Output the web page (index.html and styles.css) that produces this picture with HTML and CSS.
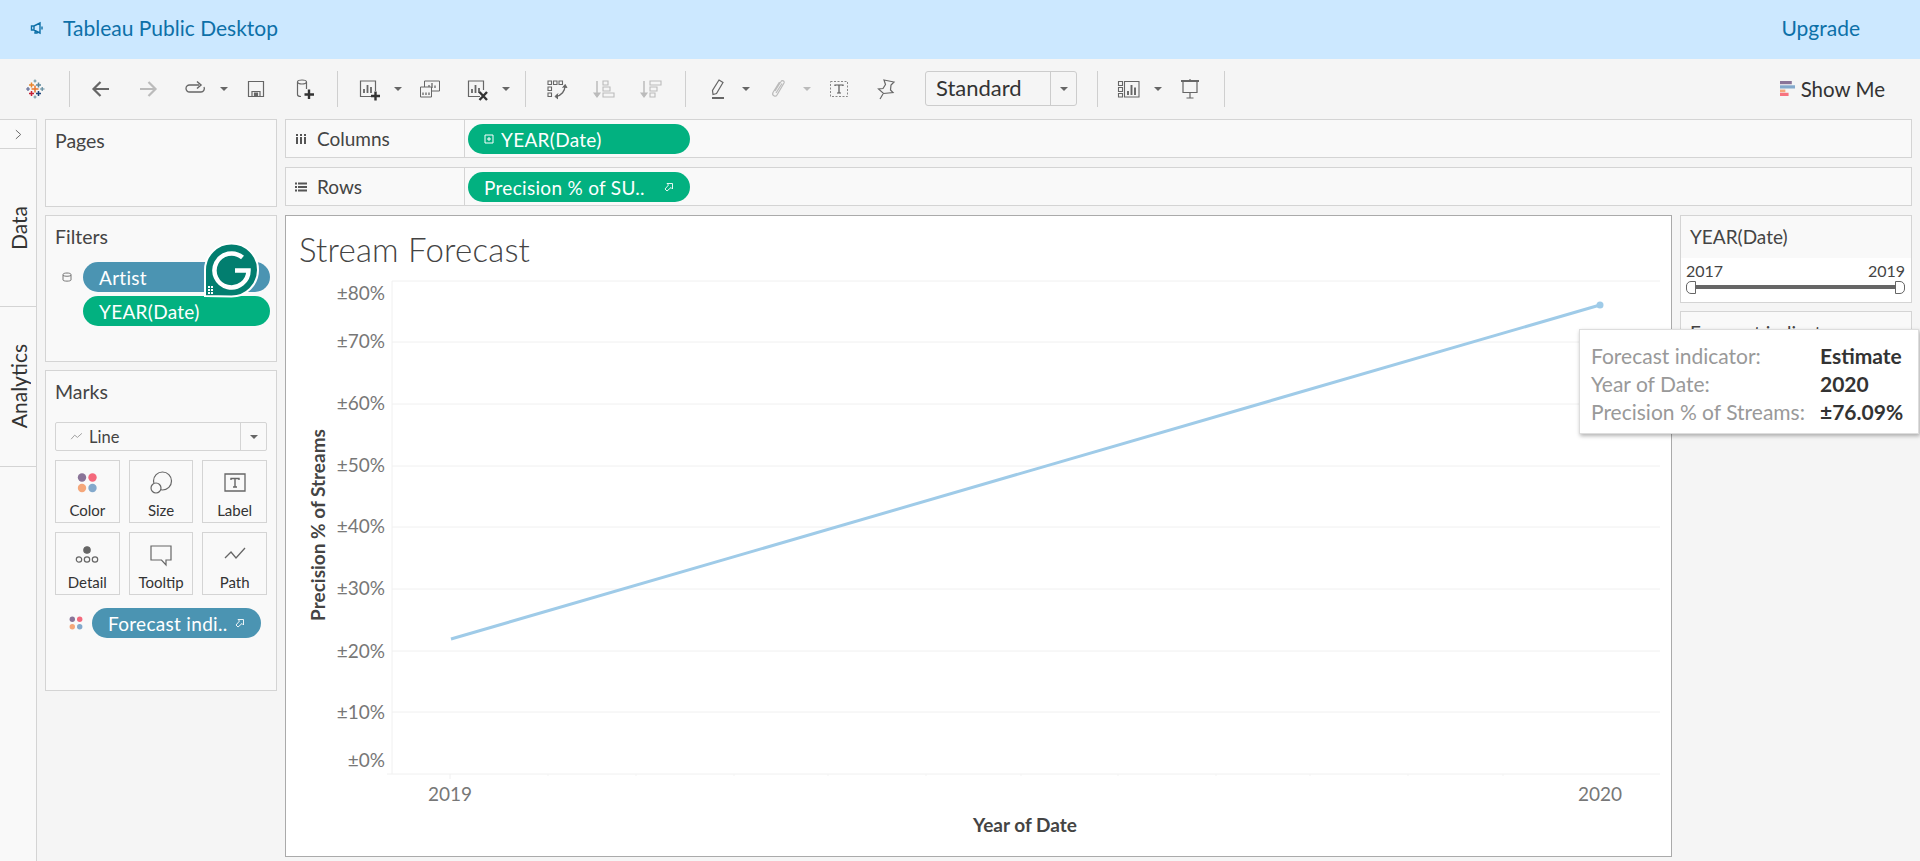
FILE: index.html
```html
<!DOCTYPE html>
<html lang="en">
<head>
    <meta charset="UTF-8">
    <title>Tableau Public Desktop</title>
    <link rel="stylesheet" href="styles.css">
</head>
<body>
    <header class="topbar">
        <div class="brand">
            <svg class="brand-icon" viewBox="0 0 14 14"><path d="M1.500 5v4h2.500l6 3V2L4 5zM4 5v4M5 9.500v2.500h2v-1.500M12 5.500v3" fill="none" stroke="#0d70a8" stroke-width="1.400"/></svg>
            <span>Tableau Public Desktop</span>
        </div>
        <a class="upgrade">Upgrade</a>
    </header>

    <div class="toolbar">
        <div class="tool">
            <svg viewBox="0 0 24 24" fill="none" stroke-width="1.500">
                <path d="M6 8H11M8.500 5.500V10.500" stroke="#e8862c"/>
                <path d="M8.500 12H15.500M12 8.500V15.500" stroke="#e8762c"/>
                <path d="M13 8H18M15.500 5.500V10.500" stroke="#5b879b"/>
                <path d="M6 16.500H11M8.500 14V19" stroke="#c72035"/>
                <path d="M13 16.500H18M15.500 14V19" stroke="#1f447a"/>
                <path d="M3 12H7M5 10V14" stroke="#5b6591" stroke-width="1.200"/>
                <path d="M17 12H21.500M19.200 10V14" stroke="#5b879b" stroke-width="1.200"/>
                <path d="M10.500 4H13.500M12 2.500V5.500" stroke="#7099a6" stroke-width="1.200"/>
                <path d="M10.500 20H13.500M12 18.500V21.500" stroke="#7099a6" stroke-width="1.200"/>
            </svg>
        </div>
        <div class="sep"></div>
        <div class="tool">
            <svg viewBox="0 0 24 24" fill="none" stroke="#666" stroke-width="2.200"><path d="M20 12H5M11.500 5L4.500 12L11.500 19"/></svg>
        </div>
        <div class="tool">
            <svg viewBox="0 0 24 24" fill="none" stroke="#bbb" stroke-width="2.200"><path d="M4 12H19M12.500 5L19.500 12L12.500 19"/></svg>
        </div>
        <div class="tool">
            <svg viewBox="0 0 24 24" fill="none" stroke="#666" stroke-width="1.300"><path d="M16 8H6.500a3.500 3.500 0 0 0 0 7H18a3.500 3.500 0 0 0 3-5"/><path d="M14 4.500L18 8L14 11.500" stroke-width="1.500"/></svg>
        </div>
        <div class="caret"></div>
        <div class="tool">
            <svg viewBox="0 0 24 24" fill="none" stroke="#666" stroke-width="1.200"><path d="M4.500 4.500H19.500V19.500H4.500Z"/><path d="M8 19.500V14.500H16V19.500"/><path d="M10.500 16H13.500V19.500H10.500Z" fill="#666"/></svg>
        </div>
        <div class="tool">
            <svg viewBox="0 0 24 24" fill="none" stroke="#666" stroke-width="1.200"><ellipse cx="11" cy="5" rx="4.500" ry="2"/><path d="M6.500 5V17.500c0 1.200 1.500 2 3.500 2M15.500 5V12"/><path d="M18 12.500V22M13.500 17.500H23" stroke="#333" stroke-width="2.400"/></svg>
        </div>
        <div class="sep"></div>
        <div class="tool">
            <svg viewBox="0 0 24 24" fill="none" stroke="#666" stroke-width="1.200"><path d="M16 19.500H3.500V4H18.500V14"/><path d="M7 16V12M10.500 16V8M14 16V10" stroke-width="1.800"/><path d="M18.500 14.500V23.500M14 19H23" stroke="#333" stroke-width="2.400"/></svg>
        </div>
        <div class="caret"></div>
        <div class="tool">
            <svg viewBox="0 0 24 24" fill="none" stroke="#666" stroke-width="1"><path d="M6.500 10V4H21.500V14H14"/><path d="M11 11V8M14 11V6M17 11V8.500" stroke-width="1.300"/><path d="M2.500 10H13.500V20H2.500Z" fill="#f5f5f5"/><path d="M5 18V15.500M8 18V15.500M11 18V15.500" stroke-width="1.300"/></svg>
        </div>
        <div class="tool">
            <svg viewBox="0 0 24 24" fill="none" stroke="#666" stroke-width="1.200"><path d="M15 19.500H3.500V4H18.500V13"/><path d="M7 16V12M10.500 16V8M14 16V11" stroke-width="1.800"/><path d="M14.500 15L22 23M22 15L14.500 23" stroke="#333" stroke-width="2.400"/></svg>
        </div>
        <div class="caret"></div>
        <div class="sep"></div>
        <div class="tool">
            <svg viewBox="0 0 24 24" fill="none" stroke="#666" stroke-width="1.100"><path d="M3 4H6.500V7.500H3ZM8.500 4H12V7.500H8.500ZM14 4H17.500V7.500H14ZM3 10H6.500V13.500H3ZM3 16H6.500V19.500H3Z"/><path d="M20 9c0 5-3.500 9.500-9 10.500" stroke-width="1.300"/><path d="M17.500 10.500L20.200 7.500L22 11M13 16.500L10 19.500L13 22" fill="#666" stroke-width="1"/></svg>
        </div>
        <div class="tool">
            <svg viewBox="0 0 24 24" fill="none" stroke="#bbb" stroke-width="1.100"><path d="M5 4V18" stroke-width="1.500"/><path d="M2 16L5 20L8 16Z" fill="#bbb"/><path d="M11 4H16V8H11ZM11 10H18V14H11ZM11 16H22V20H11Z"/></svg>
        </div>
        <div class="tool">
            <svg viewBox="0 0 24 24" fill="none" stroke="#bbb" stroke-width="1.100"><path d="M5 4V18" stroke-width="1.500"/><path d="M2 16L5 20L8 16Z" fill="#bbb"/><path d="M11 4H22V8H11ZM11 10H18V14H11ZM11 16H16V20H11Z"/></svg>
        </div>
        <div class="sep"></div>
        <div class="tool">
            <svg viewBox="0 0 24 24" fill="none" stroke="#666" stroke-width="1.200"><path d="M14 3L18 5.500L11.500 16.500L8 17.500L7.500 13.500Z"/><path d="M7 21H19" stroke-width="2"/></svg>
        </div>
        <div class="caret"></div>
        <div class="tool">
            <svg viewBox="0 0 24 24" fill="none" stroke="#bbb" stroke-width="1.200"><path d="M9 14L15 4.500c1-1.700 4-.5 3 1.500L11 18c-1.500 2.500-5.500.5-4-2.500L13.500 5M10 16l6-9.500"/></svg>
        </div>
        <div class="caret caret-off"></div>
        <div class="tool">
            <svg viewBox="0 0 24 24" fill="none" stroke="#888" stroke-width="1"><path d="M3.500 4.500H20.500V19.500H3.500Z" stroke-dasharray="2 1.500"/><path d="M8 9V8H16V9M12 8V16M10 16H14" stroke="#555" stroke-width="1.200"/></svg>
        </div>
        <div class="tool tool-pin">
            <svg viewBox="0 0 24 24" fill="none" stroke="#666" stroke-width="1.200"><path d="M10 3L20 5L17 8L16.500 13L19 15.500L9.500 16.500L4.500 12L9 11.500L11.500 7.500Z"/><path d="M9 17L6 22"/></svg>
        </div>
        <div class="combo">
            <span class="combo-text">Standard</span>
            <span class="combo-btn"><i class="caret caret-dark"></i></span>
        </div>
        <div class="sep"></div>
        <div class="tool">
            <svg viewBox="0 0 24 24" fill="none" stroke="#666" stroke-width="1.100"><path d="M1.500 4.500H5.500V8.500H1.500ZM1.500 10.500H5.500V14.500H1.500ZM1.500 16.500H5.500V20H1.500ZM7.500 4.500H22V20H7.500Z"/><path d="M11 18V14M14.500 18V8M18 18V10.500" stroke-width="1.900"/></svg>
        </div>
        <div class="caret"></div>
        <div class="tool">
            <svg viewBox="0 0 24 24" fill="none" stroke="#666" stroke-width="1.200"><path d="M3 4H21" stroke-width="2"/><path d="M5 4V15.500H19V4M12 2V4M12 15.500V21M8.500 21H15.500"/></svg>
        </div>
        <div class="sep"></div>
        <div class="show-me">
            <svg viewBox="0 0 14 14" class="show-me-icon">
                <rect x="0" y="0" width="11" height="3" fill="#8a7498"/>
                <rect x="0" y="4" width="14" height="3" fill="#83a9cc"/>
                <rect x="0" y="8" width="5" height="2.500" fill="#f5a77a"/>
                <rect x="0" y="11" width="8" height="3" fill="#f7737f"/>
            </svg>
            <span>Show Me</span>
        </div>
    </div>

    <div class="workspace">
        <nav class="side-tabs">
            <div class="tabs-toggle">
                <svg viewBox="0 0 8 12" width="7" height="11" fill="none" stroke="#666" stroke-width="1.100"><path d="M1 1L6.500 6L1 11"/></svg>
            </div>
            <div class="side-tab side-tab-data"><span>Data</span></div>
            <div class="side-tab"><span>Analytics</span></div>
        </nav>

        <aside class="cards">
            <section class="panel panel-pages">
                <h2>Pages</h2>
            </section>
            <section class="panel panel-filters">
                <h2>Filters</h2>
                <div class="filter-row">
                    <svg class="db-icon" viewBox="0 0 10 10" fill="none" stroke="#777"><path d="M1 2.500C1 .5 9 .5 9 2.500V8c0 1.500-8 1.500-8 0ZM1 3.500c2 1 6 1 8 0"/></svg>
                    <div class="pill pill-blue">Artist</div>
                </div>
                <div class="filter-row">
                    <div class="pill pill-green">YEAR(Date)</div>
                </div>
                <svg class="grammarly" viewBox="0 0 57 54">
                    <path d="M2 53V27A26.500 26.500 0 1 1 28.500 53.500Z" fill="#027e6f" stroke="#fff" stroke-width="2"/>
                    <path d="M39.500 14.500A17 17 0 1 0 45.500 27.500H32" fill="none" stroke="#fff" stroke-width="4.500"/>
                    <path d="M5 43h2v2H5zM8 43h2v2H8zM5 46h2v2H5zM8 46h2v2H8zM5 49h2v2H5zM8 49h2v2H8z" fill="#fff"/>
                </svg>
            </section>
            <section class="panel panel-marks">
                <h2>Marks</h2>
                <div class="mark-type">
                    <span class="mark-type-name">
                        <svg viewBox="0 0 14 10" width="13" height="9" fill="none" stroke="#999" stroke-width="1"><path d="M1 8L5 3.500L8 6L13 1.500"/></svg>
                        Line
                    </span>
                    <span class="mark-type-btn"><i class="caret caret-dark"></i></span>
                </div>
                <div class="mark-grid">
                    <div class="mark-card">
                        <svg viewBox="0 0 24 24">
                            <circle cx="7" cy="6.500" r="4.200" fill="#8a7498"/>
                            <circle cx="17.500" cy="6.500" r="4.200" fill="#f4697c"/>
                            <circle cx="7" cy="17" r="4.200" fill="#f5a77a"/>
                            <circle cx="17.500" cy="17" r="4.200" fill="#83a9cc"/>
                        </svg>
                        <span>Color</span>
                    </div>
                    <div class="mark-card">
                        <svg viewBox="0 0 24 24" fill="none" stroke="#666" stroke-width="1.200"><circle cx="13.500" cy="10" r="9"/><circle cx="7" cy="17" r="5" fill="#f9f9f9"/></svg>
                        <span>Size</span>
                    </div>
                    <div class="mark-card">
                        <svg viewBox="0 0 24 24" fill="none" stroke="#666" stroke-width="1.300"><path d="M2 3H22V20H2Z"/><path d="M8 9V7.500H16V9M12 7.500V16M10 16H14" stroke-width="1.400"/></svg>
                        <span>Label</span>
                    </div>
                    <div class="mark-card">
                        <svg viewBox="0 0 24 24" fill="none" stroke="#666" stroke-width="1.200"><circle cx="12" cy="7" r="3.200" fill="#666"/><circle cx="4" cy="16.500" r="2.700"/><circle cx="12" cy="16.500" r="2.700"/><circle cx="20" cy="16.500" r="2.700"/></svg>
                        <span>Detail</span>
                    </div>
                    <div class="mark-card">
                        <svg viewBox="0 0 24 24" fill="none" stroke="#666" stroke-width="1.200"><path d="M2 3H22V17H17V22L12.500 17H2Z"/></svg>
                        <span>Tooltip</span>
                    </div>
                    <div class="mark-card">
                        <svg viewBox="0 0 24 24" fill="none" stroke="#666" stroke-width="1.300"><path d="M2 15L8 9L13 15L22 5"/></svg>
                        <span>Path</span>
                    </div>
                </div>
                <div class="mark-field">
                    <svg class="mark-field-icon" viewBox="0 0 14 14">
                        <circle cx="3.300" cy="3.300" r="2.700" fill="#8a7498"/>
                        <circle cx="10.700" cy="3.300" r="2.700" fill="#f4697c"/>
                        <circle cx="3.300" cy="10.700" r="2.700" fill="#f5a77a"/>
                        <circle cx="10.700" cy="10.700" r="2.700" fill="#83a9cc"/>
                    </svg>
                    <div class="pill pill-blue pill-end">
                        Forecast indi..
                        <svg class="pill-glyph" viewBox="0 0 10 10" fill="none" stroke="#fff" stroke-width=".9"><path d="M3 1.500H8.500V7L7 5.500L3 9L1 7L4.500 3Z"/></svg>
                    </div>
                </div>
            </section>
        </aside>

        <main class="content">
            <div class="shelf">
                <div class="shelf-label">
                    <svg viewBox="0 0 12 12" width="12" height="12" fill="#555"><path d="M1 4h2v7H1zM5 4h2v7H5zM9 4h2v7H9zM1 1h2v2H1zM5 1h2v2H5zM9 1h2v2H9z"/></svg>
                    Columns
                </div>
                <div class="shelf-body">
                    <div class="pill pill-green pill-shelf">
                        <svg class="pill-plus" viewBox="0 0 10 10" fill="none" stroke="#fff"><path d="M1 1H9V9H1ZM3 5H7M5 3V7"/></svg>
                        YEAR(Date)
                    </div>
                </div>
            </div>
            <div class="shelf">
                <div class="shelf-label">
                    <svg viewBox="0 0 12 12" width="12" height="12" fill="#555"><path d="M0 1.500h2v2H0zM3 1.500h9v2H3zM0 5h2v2H0zM3 5h9v2H3zM0 8.500h2v2H0zM3 8.500h9v2H3z"/></svg>
                    Rows
                </div>
                <div class="shelf-body">
                    <div class="pill pill-green pill-shelf pill-end">
                        Precision % of SU..
                        <svg class="pill-glyph" viewBox="0 0 10 10" fill="none" stroke="#fff" stroke-width=".9"><path d="M3 1.500H8.500V7L7 5.500L3 9L1 7L4.500 3Z"/></svg>
                    </div>
                </div>
            </div>
            <div class="view-row">
                <section class="chart">
                    <svg class="chart-svg" viewBox="286 216 1385 640">
                        <text class="chart-title" x="299" y="262">Stream Forecast</text>

                        <path class="grid" d="M392 281H1660M392 342H1660M392 404H1660M392 466H1660M392 527H1660M392 589H1660M392 651H1660M392 712H1660M387 774H1660M392 281V774"/>
                        <path class="grid" d="M450 774V779"/>
                        <path class="tick" d="M548 774v2M636 774v2M734 774v2M828 774v2M926 774v2M1021 774v2M1118 774v2M1216 774v2M1310 774v2M1408 774v2M1503 774v2"/>

                        <g class="axis-y">
                            <text x="385" y="300">±80%</text>
                            <text x="385" y="348">±70%</text>
                            <text x="385" y="410">±60%</text>
                            <text x="385" y="472">±50%</text>
                            <text x="385" y="533">±40%</text>
                            <text x="385" y="595">±30%</text>
                            <text x="385" y="658">±20%</text>
                            <text x="385" y="719">±10%</text>
                            <text x="385" y="767">±0%</text>
                        </g>
                        <g class="axis-x">
                            <text x="450" y="801">2019</text>
                            <text x="1600" y="801">2020</text>
                        </g>
                        <text class="axis-title" x="1025" y="832">Year of Date</text>
                        <text class="axis-title" transform="translate(325 525) rotate(-90)">Precision % of Streams</text>

                        <path d="M451 639L1600 305" fill="none" stroke="#9fcbe8" stroke-width="3"/>
                        <circle cx="1600" cy="305" r="3.500" fill="#9fcbe8"/>
                    </svg>
                </section>
                <aside class="legends">
                    <section class="panel panel-slider">
                        <h3>YEAR(Date)</h3>
                        <div class="slider-body">
                            <div class="slider-labels"><span>2017</span><span>2019</span></div>
                            <div class="slider-track"></div>
                        </div>
                    </section>
                    <section class="panel panel-legend">
                        <h3>Forecast indicator</h3>
                    </section>
                </aside>
            </div>
        </main>
    </div>

    <div class="tooltip">
        <span class="tip-key">Forecast indicator:</span><span class="tip-val">Estimate</span>
        <span class="tip-key">Year of Date:</span><span class="tip-val">2020</span>
        <span class="tip-key">Precision % of Streams:</span><span class="tip-val">±76.09%</span>
    </div>
</body>
</html>
```

FILE: styles.css
```css
* {
    box-sizing: border-box;
}

body {
    margin: 0;
    height: 861px;
    overflow: hidden;
    background: #f5f5f5;
    font-family: Lato, "Open Sans", sans-serif;
    color: #444;
}

h2, h3 {
    margin: 0;
    font-weight: 400;
}

/* top banner */
.topbar {
    height: 59px;
    padding: 0 60px 4px 30px;
    display: flex;
    align-items: center;
    justify-content: space-between;
    background: #cce8ff;
    color: #0d70a8;
    font-size: 21px;
}

.brand {
    display: flex;
    align-items: center;
    gap: 19px;
}

.brand-icon {
    width: 14px;
    height: 14px;
}

/* toolbar */
.toolbar {
    height: 59px;
    padding-left: 15px;
    display: flex;
    align-items: center;
    gap: 7px;
}

.tool {
    width: 40px;
    height: 24px;
    display: flex;
    justify-content: center;
    flex: none;
}

.tool svg {
    width: 24px;
    height: 24px;
}

.tool-pin {
    margin-right: 5px;
}

.sep {
    width: 1px;
    height: 36px;
    margin: 0 4px 0 7px;
    background: #cfcfcf;
    flex: none;
}

.caret {
    width: 4px;
    height: 4px;
    margin-right: 3px;
    position: relative;
    flex: none;
}

.caret::after {
    content: "";
    position: absolute;
    left: -2px;
    top: 0;
    border-left: 4px solid transparent;
    border-right: 4px solid transparent;
    border-top: 4px solid #666;
}

.caret-off::after {
    border-top-color: #bbb;
}

.caret-dark {
    display: block;
    margin: 0;
}

.combo {
    width: 152px;
    height: 35px;
    margin: 0 6px 0 7px;
    display: flex;
    flex: none;
    border: 1px solid #ccc;
    border-radius: 3px;
    font-size: 22px;
    color: #333;
}

.combo-text {
    flex: 1;
    padding-left: 10px;
    line-height: 32px;
}

.combo-btn {
    width: 26px;
    border-left: 1px solid #ccc;
    display: flex;
    align-items: center;
    justify-content: center;
}

.show-me {
    margin-left: auto;
    padding-right: 35px;
    display: flex;
    align-items: center;
    gap: 6px;
    font-size: 20.500px;
    color: #333;
}

.show-me-icon {
    width: 15px;
    height: 15px;
}

/* main area */
.workspace {
    display: flex;
    height: 743px;
    padding-top: 1px;
}

.side-tabs {
    width: 37px;
    flex: none;
    background: #f9f9f9;
    border-top: 1px solid #d4d4d4;
    border-right: 1px solid #d4d4d4;
}

.tabs-toggle {
    height: 29px;
    display: flex;
    align-items: center;
    justify-content: center;
    border-bottom: 1px solid #d4d4d4;
}

.side-tab {
    height: 160px;
    display: flex;
    align-items: center;
    justify-content: center;
    border-bottom: 1px solid #d4d4d4;
    font-size: 21px;
    color: #333;
}

.side-tab-data {
    height: 158px;
}

.side-tab span {
    writing-mode: vertical-rl;
    transform: rotate(180deg);
}

.cards {
    width: 232px;
    margin-left: 8px;
    flex: none;
    display: flex;
    flex-direction: column;
    gap: 8px;
}

.panel {
    background: #f9f9f9;
    border: 1px solid #d4d4d4;
}

.panel h2 {
    padding: 10px 9px 0;
    font-size: 19.500px;
    line-height: 22px;
    color: #444;
}

.panel-pages {
    height: 88px;
}

.panel-filters {
    height: 147px;
    position: relative;
}

.filter-row {
    height: 30px;
    margin: 0 6px 4px 37px;
    position: relative;
}

.panel-filters h2 {
    margin-bottom: 14px;
}

.db-icon {
    position: absolute;
    left: -21px;
    top: 10px;
    width: 10px;
    height: 10px;
}

.grammarly {
    position: absolute;
    left: 157px;
    top: 27px;
    width: 57px;
    height: 54px;
    overflow: visible;
}

.panel-marks {
    height: 321px;
}

.panel-marks h2 {
    margin-bottom: 19px;
}

.mark-type {
    height: 29px;
    margin: 0 9px 0 9px;
    display: flex;
    border: 1px solid #d4d4d4;
    border-radius: 2px;
    font-size: 16.500px;
    color: #444;
}

.mark-type-name {
    flex: 1;
    padding-left: 14px;
    display: flex;
    align-items: center;
    gap: 6px;
}

.mark-type-btn {
    width: 26px;
    border-left: 1px solid #d4d4d4;
    display: flex;
    align-items: center;
    justify-content: center;
}

.mark-grid {
    margin: 9px 9px 0;
    display: grid;
    grid-template-columns: repeat(3, 1fr);
    grid-auto-rows: 63px;
    gap: 9px;
}

.mark-card {
    display: flex;
    flex-direction: column;
    align-items: center;
    padding-top: 10px;
    border: 1px solid #d4d4d4;
    font-size: 15px;
    color: #333;
}

.mark-card svg {
    width: 24px;
    height: 24px;
    margin-bottom: 6px;
}

.mark-field {
    margin: 13px 15px 0 23px;
    display: flex;
    align-items: center;
    gap: 9px;
}

.mark-field-icon {
    width: 14px;
    height: 14px;
    flex: none;
}

/* field pills */
.pill {
    height: 30px;
    border-radius: 15px;
    padding: 0 16px 0 16px;
    display: flex;
    align-items: center;
    color: #fff;
    font-size: 19px;
    letter-spacing: 0.3px;
}

.pill-blue {
    background: #4b94b2;
}

.pill-green {
    background: #02b180;
}

.pill-end {
    flex: 1;
    justify-content: space-between;
}

.pill-glyph {
    width: 10px;
    height: 10px;
}

/* shelves */
.content {
    width: 1627px;
    margin-left: 8px;
    display: flex;
    flex-direction: column;
    gap: 9px;
}

.shelf {
    height: 39px;
    display: flex;
    background: #f9f9f9;
    border: 1px solid #d4d4d4;
}

.shelf-label {
    width: 179px;
    padding-left: 9px;
    display: flex;
    align-items: center;
    gap: 10px;
    border-right: 1px solid #d4d4d4;
    font-size: 19px;
    color: #444;
}

.shelf-body {
    padding: 4px 3px;
}

.pill-shelf {
    width: 222px;
}

.pill-plus {
    width: 10px;
    height: 10px;
    margin-right: 7px;
}

/* view */
.view-row {
    display: flex;
    gap: 8px;
}

.chart {
    width: 1387px;
    height: 642px;
    background: #fff;
    border: 1px solid #aaa;
}

.chart-svg {
    display: block;
    width: 1385px;
    height: 640px;
}

.chart-title {
    font-size: 33px;
    font-weight: 300;
    letter-spacing: 0.2px;
    fill: #444;
}

.grid {
    fill: none;
    stroke: #f0f0f0;
    stroke-width: 1;
}

.tick {
    fill: none;
    stroke: #f3f3f3;
}

.axis-y text {
    font-size: 19px;
    fill: #777;
    text-anchor: end;
}

.axis-x text {
    font-size: 19px;
    fill: #777;
    text-anchor: middle;
}

.axis-title {
    font-size: 19px;
    font-weight: 700;
    fill: #444;
    text-anchor: middle;
}

.legends {
    width: 232px;
    display: flex;
    flex-direction: column;
    gap: 8px;
}

.panel h3 {
    height: 42px;
    padding: 10px 9px 0;
    font-size: 19px;
    line-height: 22px;
    color: #444;
}

.panel-slider {
    height: 88px;
}

.slider-body {
    height: 44px;
    background: #fff;
    padding: 3px 6px 0 5px;
}

.slider-labels {
    display: flex;
    justify-content: space-between;
    font-size: 16px;
    color: #444;
}

.slider-track {
    height: 4px;
    margin-top: 5px;
    background: #666;
    position: relative;
}

.slider-track::before,
.slider-track::after {
    content: "";
    position: absolute;
    top: -4px;
    width: 8px;
    height: 11px;
    background: #fff;
    border: 1px solid #666;
}

.slider-track::before {
    left: 0;
    border-radius: 5px 0 0 5px;
}

.slider-track::after {
    right: 0;
    border-radius: 0 5px 5px 0;
}

.panel-legend {
    height: 120px;
}

/* hover tooltip */
.tooltip {
    position: absolute;
    left: 1579px;
    top: 329px;
    width: 340px;
    height: 105px;
    padding: 11px 11px;
    display: grid;
    grid-template-columns: 229px 1fr;
    grid-auto-rows: 28px;
    align-items: center;
    background: #fff;
    border: 1px solid #ddd;
    box-shadow: 1px 2px 4px rgba(0, 0, 0, 0.3);
    font-size: 21px;
}

.tip-key {
    color: #999;
}

.tip-val {
    color: #333;
    font-weight: 700;
}
```
